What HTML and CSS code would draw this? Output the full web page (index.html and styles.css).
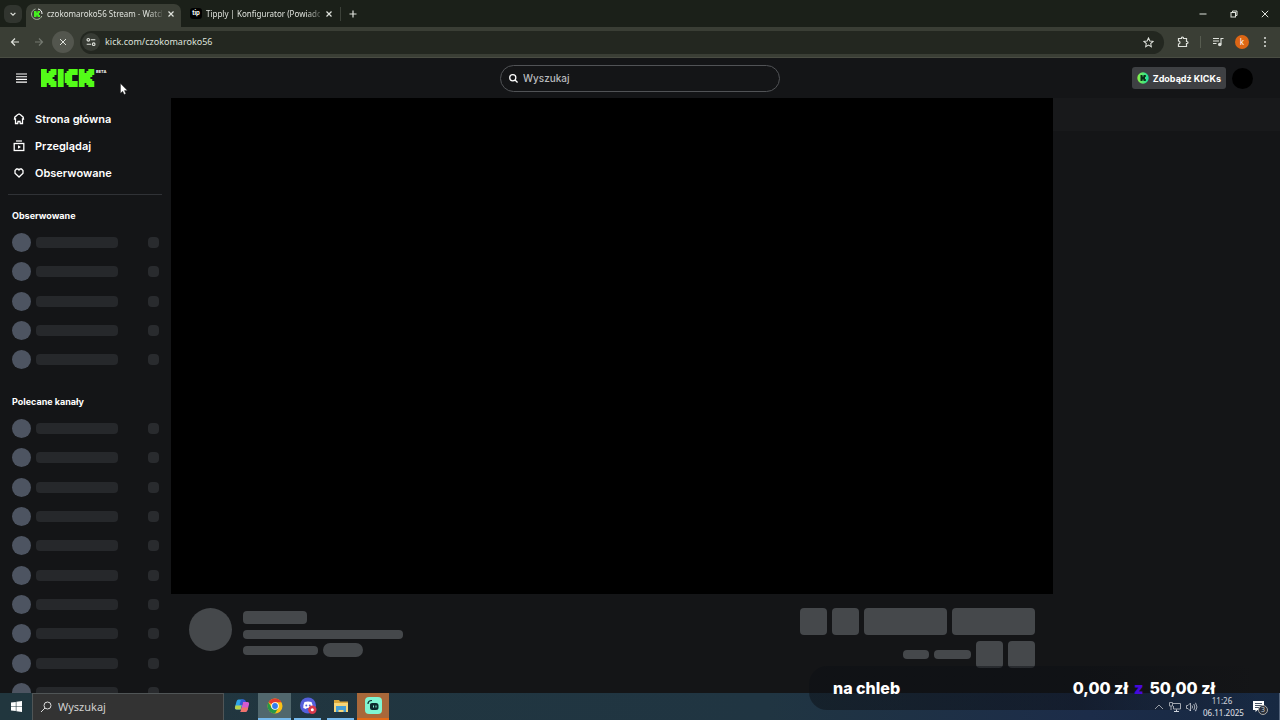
FILE: index.html
```html
<!DOCTYPE html>
<html lang="pl">
<head>
<meta charset="utf-8">
<title>czokomaroko56 Stream - Watch Live on Kick</title>
<link rel="stylesheet" href="styles.css">
</head>
<body>
<div class="tabstrip">
  <button class="tab-search" aria-label="Szukaj kart"><svg viewBox="0 0 10 10" width="8" height="8"><path d="M2 3.500l3 3 3-3" fill="none" stroke="currentColor" stroke-width="1.500"/></svg></button>
  <div class="tab tab-active">
    <svg class="favicon" viewBox="0 0 12 12" width="12" height="12"><path d="M4.500 1A5.300 5.300 0 1 0 10.800 8" fill="none" stroke="#a9b8a2" stroke-width="1"/><path d="M7 1a5 5 0 0 1 4 5" fill="none" stroke="#fff" stroke-width="1"/><path d="M3 3h2.500v1.500h1V3H9v2H8v2h1v2H6.500V7.500h-1V9H3z" fill="#45ef20"/></svg>
    <span class="tab-title">czokomaroko56 Stream - Watch</span>
    <button class="tab-close" aria-label="Zamknij kartę"><svg viewBox="0 0 8 8" width="8" height="8"><path d="M1.500 1.500l5 5m0-5l-5 5" stroke="currentColor" stroke-width="1.200"/></svg></button>
  </div>
  <div class="tab tab-second">
    <span class="tip-icon">tip</span>
    <span class="tab-title">Tipply | Konfigurator (Powiadon</span>
    <button class="tab-close" aria-label="Zamknij kartę"><svg viewBox="0 0 8 8" width="8" height="8"><path d="M1.500 1.500l5 5m0-5l-5 5" stroke="currentColor" stroke-width="1.200"/></svg></button>
  </div>
  <button class="new-tab" aria-label="Nowa karta"><svg viewBox="0 0 8 8" width="8" height="8"><path d="M4 .5v7M.5 4h7" stroke="currentColor" stroke-width="1.200"/></svg></button>
  <div class="window-buttons">
    <button aria-label="Minimalizuj"><svg viewBox="0 0 8 8" width="8" height="8"><path d="M.5 4h7" stroke="currentColor"/></svg></button>
    <button aria-label="Przywróć"><svg viewBox="0 0 8 8" width="8" height="8" fill="none" stroke="currentColor"><rect x="1" y="2.500" width="4.500" height="4.500"/><path d="M2.500 2.500V1H7v4.500H5.500"/></svg></button>
    <button aria-label="Zamknij"><svg viewBox="0 0 8 8" width="8" height="8"><path d="M.8.8l6.400 6.400m0-6.400L.8 7.200" stroke="currentColor"/></svg></button>
  </div>
</div>
<div class="toolbar">
  <button class="tool" aria-label="Wstecz"><svg viewBox="0 0 10 10" width="10" height="10" fill="none" stroke="currentColor" stroke-width="1.200"><path d="M9 5H1.500M5 1.500L1.500 5 5 8.500"/></svg></button>
  <button class="tool tool-dim" aria-label="Dalej"><svg viewBox="0 0 10 10" width="10" height="10" fill="none" stroke="currentColor" stroke-width="1.200"><path d="M1 5h7.500M5 1.500L8.500 5 5 8.500"/></svg></button>
  <button class="tool tool-round" aria-label="Zatrzymaj"><svg viewBox="0 0 10 10" width="10" height="10"><path d="M2 2l6 6m0-6L2 8" stroke="currentColor" stroke-width="1"/></svg></button>
  <div class="omnibox">
    <button class="site-info" aria-label="Informacje o stronie"><svg viewBox="0 0 10 10" width="10" height="10" fill="none" stroke="currentColor" stroke-width="1.100"><circle cx="2.300" cy="2.800" r="1.300"/><path d="M4.800 2.800h4.500M.7 7.200h4.500"/><circle cx="7.700" cy="7.200" r="1.300"/></svg></button>
    <input class="url" aria-label="Adres" value="kick.com/czokomaroko56">
    <button class="bookmark" aria-label="Dodaj do zakładek"><svg viewBox="0 0 12 12" width="11" height="11"><path d="M6 1l1.500 3.300 3.500.4-2.600 2.400.7 3.600L6 8.900l-3.100 1.800.7-3.600L1 4.700l3.500-.4z" fill="none" stroke="currentColor" stroke-width="1.100"/></svg></button>
  </div>
  <div class="browser-actions">
    <button aria-label="Rozszerzenia"><svg viewBox="0 0 12 12" width="12" height="12"><path d="M1.500 2.500H4.500V2a1 1 0 0 1 2 0v.5H9.500v3h.5a1 1 0 0 1 0 2h-.5v3h-8V8a1.500 1.500 0 0 0 0-3z" fill="none" stroke="currentColor" stroke-width="1.200"/></svg></button>
    <span class="tool-divider"></span>
    <button aria-label="Multimedia"><svg viewBox="0 0 12 12" width="12" height="12" fill="none" stroke="currentColor" stroke-width="1.100"><path d="M1 2.500h6M1 5h6M1 7.500h3.500M9 8.500V2.500h2.500"/><circle cx="7.800" cy="8.500" r="1.200" fill="currentColor"/></svg></button>
    <button class="profile" aria-label="Profil">k</button>
    <button aria-label="Menu"><svg viewBox="0 0 10 10" width="10" height="10" fill="currentColor"><circle cx="5" cy="1" r="1"/><circle cx="5" cy="5" r="1"/><circle cx="5" cy="9" r="1"/></svg></button>
  </div>
</div>
<div class="page">
  <header class="site-header">
    <div class="brand">
      <button class="menu" aria-label="Menu"><svg viewBox="0 0 11 10" width="11" height="10"><path d="M0 1h11M0 3.700h11M0 6.400h11M0 9.100h11" stroke="currentColor" stroke-width="1.100"/></svg></button>
      <a class="logo" href="#" aria-label="Kick"><svg viewBox="0 0 54 18" width="54" height="18" fill="#53fc18"><path id="k" d="M0 0h5.800v4h1.800V2h1.900V0h6v6h-2v2h-1.900v2h1.900v2h2v6h-6v-2H7.600v-2H5.800v4H0z"/><path d="M16.800 0h5.900v18h-5.900zM27.500 0h9.200v6h-5.500v6h5.500v6h-9.200v-2h-1.900v-2h-1.900V4h1.900V2h1.900z"/><use href="#k" x="37.800"/></svg></a>
      <span class="beta">BETA</span>
    </div>
    <label class="site-search"><svg viewBox="0 0 10 10" width="9" height="9" fill="none" stroke="#fff" stroke-width="1.400"><circle cx="4.200" cy="4.200" r="3.400"/><path d="M6.700 6.700L9.500 9.500"/></svg><input aria-label="Wyszukaj" placeholder="Wyszukaj"></label>
    <div class="account">
      <button class="kicks"><svg viewBox="0 0 12 12" width="12" height="12"><defs><linearGradient id="coin" x1="0" x2="1"><stop offset="0" stop-color="#8bf346"/><stop offset="1" stop-color="#19dfa0"/></linearGradient></defs><circle cx="6" cy="6" r="5.700" fill="url(#coin)"/><path d="M3.500 3h2v1.500h1V3h2.300v2H8v2h.8v2H6.500V7.500h-1V9h-2z" fill="#092d18"/></svg>Zdobądź KICKs</button>
      <button class="avatar" aria-label="Konto"></button>
    </div>
  </header>
  <div class="columns">
    <aside class="sidebar">
      <nav>
        <a href="#"><svg viewBox="0 0 12 12" width="12" height="12"><path d="M6 1L4.500 1.800 1.800 4.200 1.500 6H2.500v4.500h2.200L5 8.500h2l.3 2h2.200V6h1L10.200 4.200 7.500 1.800z" fill="none" stroke="currentColor" stroke-width="1.300"/></svg>Strona główna</a>
        <a href="#"><svg viewBox="0 0 12 12" width="12" height="12"><path d="M3 1h6" stroke="currentColor" stroke-width="1.200"/><rect x="1.200" y="3.500" width="9.600" height="7" fill="none" stroke="currentColor" stroke-width="1.300"/><path d="M5 5.200v3.600L8 7z" fill="currentColor"/></svg>Przeglądaj</a>
        <a href="#"><svg viewBox="0 0 12 12" width="12" height="12"><path d="M6 10L2 6.200V3.500L3.500 2H5l1 1 1-1h1.500L10 3.500v2.700z" fill="none" stroke="currentColor" stroke-width="1.300"/></svg>Obserwowane</a>
      </nav>
      <h2>Obserwowane</h2>
      <ul class="channels followed">
        <li><i></i><b></b><s></s></li><li><i></i><b></b><s></s></li><li><i></i><b></b><s></s></li><li><i></i><b></b><s></s></li><li><i></i><b></b><s></s></li>
      </ul>
      <h2>Polecane kanały</h2>
      <ul class="channels recommended">
        <li><i></i><b></b><s></s></li><li><i></i><b></b><s></s></li><li><i></i><b></b><s></s></li><li><i></i><b></b><s></s></li><li><i></i><b></b><s></s></li><li><i></i><b></b><s></s></li><li><i></i><b></b><s></s></li><li><i></i><b></b><s></s></li><li><i></i><b></b><s></s></li><li><i></i><b></b><s></s></li>
      </ul>
    </aside>
    <main>
      <div class="video"></div>
      <section class="stream-info">
        <span class="bone host"></span>
        <div class="details"><span class="bone name"></span><span class="bone title"></span><div class="tags"><span class="bone category"></span><span class="bone tag"></span></div></div>
        <div class="actions">
          <div class="action-row"><span class="bone square"></span><span class="bone square"></span><span class="bone wide"></span><span class="bone wide"></span></div>
          <div class="action-row"><span class="bone pill"></span><span class="bone pill long"></span><span class="bone square"></span><span class="bone square"></span></div>
        </div>
      </section>
    </main>
    <aside class="chat"><div class="chat-head"></div></aside>
  </div>
</div>
<footer class="taskbar">
  <button class="start" aria-label="Start"><svg viewBox="0 0 11 11" width="11" height="11" fill="#fff"><path d="M0 1.600L4.800.9v4.300H0zM5.400.8L11 0v5.200H5.400zM0 5.800h4.800v4.300L0 9.400zM5.400 5.800H11V11l-5.600-.8z"/></svg></button>
  <label class="task-search"><svg viewBox="0 0 12 12" width="12" height="12" fill="none" stroke="#ddd"><circle cx="7.500" cy="4.500" r="3.500"/><path d="M5 7L1 11"/></svg><input aria-label="Wyszukaj" placeholder="Wyszukaj"></label>
  <button class="app" aria-label="Copilot"><svg viewBox="0 0 16 16" width="16" height="16"><path d="M4.500 1.500h5L7 11.500H2.500Q.5 11.500 1 9l1.500-5.500q.5-2 2-2z" fill="#2ca5e8"/><path d="M1.500 7.500h6L6.500 11.500h-4Q.5 11.500 1 9.500z" fill="#b9d34b"/><path d="M9 4h4.500q2 0 1.500 2.500L13.500 12q-.5 2-2.500 2H6.500z" fill="#d65ad0"/><path d="M7.700 9.500h6.500L13.500 12q-.5 2-2.500 2H6.500z" fill="#f0746a"/><path d="M7 1.500h3q1.500 0 2 2.500H9L8 7H5.500z" fill="#3457d8"/></svg></button>
  <button class="app app-current" aria-label="Chrome"><svg viewBox="0 0 16 16" width="16" height="16"><circle cx="8" cy="8" r="7.500" fill="#fbc116"/><path d="M8 8L1.500 4.250A7.500 7.500 0 0 1 14.500 4.250H8z" fill="#e33b2e"/><path d="M1.500 4.250A7.500 7.500 0 0 0 8 15.500L11.200 9.900 8 8 4.750 9.900z" fill="#279847"/><circle cx="8" cy="8" r="3.800" fill="#fff"/><circle cx="8" cy="8" r="2.900" fill="#317cec"/></svg></button>
  <button class="app app-open" aria-label="Discord"><svg viewBox="0 0 18 18" width="18" height="18"><circle cx="9" cy="8.500" r="8" fill="#5560dc"/><path d="M5.500 5q3.500-1.200 7 0 1.500 3 1.200 6l-2.700 1-.7-1H7.700L7 12l-2.700-1Q4 8 5.500 5z" fill="#fff"/><circle cx="7.300" cy="8.500" r="1" fill="#5560dc"/><circle cx="10.800" cy="8.500" r="1" fill="#5560dc"/><circle cx="13.300" cy="12.800" r="4.200" fill="#d83a4c"/><circle cx="13.300" cy="12.800" r="1.500" fill="#fff"/></svg></button>
  <button class="app app-open" aria-label="Eksplorator plików"><svg viewBox="0 0 16 14" width="16" height="14"><path d="M1 1h5l1 1.500h8V13H1z" fill="#dba83a"/><path d="M1 4h14v9H1z" fill="#f7d678"/><path d="M3 7h10v6h-2.500v-2h-5v2H3z" fill="#479ed2"/></svg></button>
  <button class="app app-alert" aria-label="Streamlabs"><svg viewBox="0 0 17 17" width="17" height="17"><rect width="17" height="17" rx="4" fill="#80f5d2"/><path d="M5 7.500Q5 6 7 6h4q2.500 0 2.500 2.500v2q0 2.500-2.500 2.500H7q-2 0-2-2z" fill="#0c292c"/><path d="M3 7q0-3.500 4-3.500" fill="none" stroke="#0c292c" stroke-width="1.200"/><path d="M8.500 8.500v2M11 8.500v2" stroke="#80f5d2"/></svg></button>
  <div class="tray">
    <svg viewBox="0 0 10 10" width="10" height="10"><path d="M1 7l4-4 4 4" fill="none" stroke="currentColor"/></svg>
    <svg viewBox="0 0 12 12" width="12" height="12" fill="none" stroke="currentColor"><path d="M3.500 2.500h8v5.500h-7V5M.5 1.500h3V5h-3zM7.500 8v2.500M5 10.500h5M2 5v4"/></svg>
    <svg viewBox="0 0 12 12" width="12" height="12" fill="none" stroke="currentColor"><path d="M.5 4.500H2L4.500 2v8L2 7.500H.5zM6 4.500q1 1.500 0 3M7.800 3q2 3 0 6M9.500 1.800q3 4.200 0 8.400"/></svg>
    <time>11:26<br>06.11.2025</time>
    <div class="notice"><svg viewBox="0 0 13 13" width="13" height="13"><path d="M1 1h11v9H5.500L3.500 12v-2H1z" fill="#fff"/><path d="M3 3.500h7M3 5.500h7M3 7.500h4" stroke="#1a2b40" stroke-width=".8"/></svg><span class="notice-count">3</span></div>
  </div>
</footer>
<div class="goal"><span>na chleb</span><span class="goal-amount"><span>0,00 zł</span><b>z</b><span>50,00 zł</span></span></div>
<svg class="cursor" viewBox="0 0 8 12" width="8" height="12"><path d="M.5.5v9.800l2.200-2 1.500 3.200 1.600-.8L4.400 7.600h3z" fill="#fff" stroke="#222" stroke-width=".4"/></svg>
</body>
</html>
```
FILE: styles.css
```css
* { box-sizing: border-box; }
body { margin: 0; height: 100vh; display: flex; flex-direction: column; overflow: hidden; background: #141517; color: #fff; font-family: Inter, "Noto Sans", sans-serif; }
button { border: 0; padding: 0; background: none; color: inherit; font: inherit; display: flex; align-items: center; justify-content: center; flex-shrink: 0; }
input { border: 0; padding: 0; background: none; color: inherit; font: inherit; outline: 0; min-width: 0; flex: 1; }
a { color: inherit; text-decoration: none; }
svg { flex-shrink: 0; display: block; }

.tabstrip { height: 27px; flex-shrink: 0; display: flex; align-items: center; background: #1b2019; color: #dfe2dc; font: 8px/12px "Noto Sans", sans-serif; }
.tab-search { width: 18px; height: 18px; margin: 0 4px; border-radius: 6px; background: #31352f; }
.tab { display: flex; align-items: center; gap: 4px; }
.tab-active { width: 155px; height: 23px; align-self: flex-end; padding: 0 5px 4px; background: #3a3e35; border-radius: 7px 7px 0 0; }
.tab-second { width: 159px; padding: 0 6px 0 9px; }
.tab-title { flex: 1; min-width: 0; overflow: hidden; white-space: nowrap; mask-image: linear-gradient(to right, #000 88%, #0004); }
.tab-close { width: 10px; height: 12px; }
.tip-icon { width: 12px; height: 11px; border-radius: 3px; background: #000; color: #fff; font: bold 6px/10px Inter, sans-serif; text-align: center; flex-shrink: 0; }
.new-tab { width: 24px; height: 14px; border-left: 1px solid #3c4139; }
.window-buttons { margin-left: auto; display: flex; }
.window-buttons button { width: 31px; height: 24px; }

.toolbar { height: 31px; flex-shrink: 0; display: flex; align-items: center; padding: 0 10px 0 4px; background: #3a3e35; color: #dfe2dc; border-bottom: 1px solid #4a4d43; font: 9px/14px "Noto Sans", sans-serif; }
.tool { width: 22px; height: 22px; margin-right: 2px; }
.tool-dim { color: #747970; }
.tool-round { border-radius: 50%; background: #53564e; margin-right: 6px; }
.omnibox { flex: 1; height: 23px; display: flex; align-items: center; gap: 5px; padding: 0 10px 0 2px; border-radius: 12px; background: #232720; }
.site-info { width: 18px; height: 18px; border-radius: 50%; background: #373b34; }
.browser-actions { display: flex; align-items: center; gap: 11px; padding-left: 13px; }
.tool-divider { width: 1px; height: 12px; background: #575c50; }
.profile { width: 14px; height: 14px; border-radius: 50%; background: #dc6615; color: #fff; font-size: 8px; }

.page { flex: 1; min-height: 0; display: flex; flex-direction: column; overflow: hidden; }
.site-header { height: 40px; flex-shrink: 0; display: grid; grid-template-columns: 1fr 280px 1fr; align-items: center; padding: 0 16px; }
.brand { display: flex; align-items: center; gap: 14px; }
.beta { align-self: flex-start; margin-left: -13px; font: bold 4px/5px Inter, sans-serif; }
.site-search { height: 27px; display: flex; align-items: center; gap: 5px; padding: 0 8px; border: 1px solid #515356; border-radius: 14px; font-size: 10px; font-weight: 500; }
.site-search input::placeholder { color: #b8babd; opacity: 1; }
.account { display: flex; justify-content: flex-end; align-items: center; gap: 6px; padding-right: 11px; }
.kicks { height: 22px; padding: 0 5px; gap: 4px; border-radius: 3px; background: #3e4043; font-size: 9px; font-weight: 700; }
.avatar { width: 21px; height: 21px; border-radius: 50%; background: #000; }
.columns { flex: 1; min-height: 0; display: grid; grid-template-columns: 171px 1fr 227px; }

.sidebar { overflow: hidden; padding: 7px 9px 0 8px; }
nav { padding-bottom: 8px; border-bottom: 1px solid #303236; }
nav a { height: 27px; display: flex; align-items: center; gap: 10px; padding-left: 5px; font-size: 11px; font-weight: 600; }
h2 { margin: 13px 4px 9px; font-size: 9px; line-height: 16px; font-weight: 700; }
.channels { list-style: none; margin: 0; padding: 0 3px 0 4px; display: flex; flex-direction: column; justify-content: space-between; }
.followed { height: 136px; margin-bottom: 25px; }
.recommended { height: 283px; }
.channels li { height: 19px; display: flex; align-items: center; gap: 5px; }
.channels i { width: 19px; height: 19px; border-radius: 50%; background: #4d5461; }
.channels b { width: 82px; height: 11px; border-radius: 4px; background: #26282b; }
.channels s { width: 11px; height: 11px; margin-left: auto; border-radius: 4px; background: #292b2e; }

main { min-width: 0; display: flex; flex-direction: column; }
.video { aspect-ratio: 16 / 9; flex-shrink: 0; background: #000; }
.stream-info { display: flex; align-items: flex-start; gap: 11px; padding: 14px 18px 0; }
.bone { display: block; background: #45484b; border-radius: 4px; }
.host { width: 43px; height: 43px; border-radius: 50%; }
.details { display: flex; flex-direction: column; gap: 6px; padding-top: 3px; }
.name { width: 64px; height: 13px; }
.title { width: 160px; height: 9px; }
.tags { display: flex; align-items: center; gap: 5px; margin-top: -2px; }
.category { width: 75px; height: 9px; }
.tag { width: 40px; height: 14px; border-radius: 7px; }
.actions { margin-left: auto; display: flex; flex-direction: column; gap: 6px; }
.action-row { display: flex; justify-content: flex-end; align-items: center; gap: 5px; }
.square { width: 27px; height: 27px; }
.wide { width: 83px; height: 27px; }
.pill { width: 26px; height: 9px; }
.long { width: 37px; }
.chat-head { height: 33px; background: #18191b; }

.taskbar { height: 27px; flex-shrink: 0; display: flex; align-items: stretch; background: linear-gradient(to right, #21363e, #203542 60%, #1c2c49 85%, #172942); }
.start { width: 32px; }
.task-search { width: 192px; display: flex; align-items: center; gap: 6px; margin-right: 1px; padding: 0 7px; background: #333; border: 1px solid #505556; border-bottom: 0; font: 11px/14px "Noto Sans", sans-serif; }
.task-search input::placeholder { color: #cfcfcf; opacity: 1; }
.app { width: 33px; border-bottom: 2px solid transparent; }
.app-current { background: #51676d; border-color: #76b9ed; }
.app-open { width: 27px; margin: 0 3px; border-color: #76b9ed; }
.app-alert { width: 32px; background: #a8683a; border-color: #e36a16; }
.tray { margin-left: auto; padding-right: 14px; display: flex; align-items: center; gap: 5px; color: #ccd2dc; border-right: 1px solid #53637a; }
time { width: 38px; color: #e2e5ec; font: 8px/12px "Noto Sans", sans-serif; text-align: center; white-space: nowrap; }
.notice { position: relative; margin-left: 6px; }
.notice-count { position: absolute; left: 6px; top: 5px; width: 10px; height: 10px; border: 1px solid #aaa; border-radius: 50%; background: #292f38; font: 7px/8px "Noto Sans", sans-serif; text-align: center; }

.goal { position: absolute; right: 21px; bottom: 10px; width: 450px; height: 44px; display: flex; justify-content: space-between; align-items: center; padding: 0 44px 0 24px; border-radius: 18px; background: linear-gradient(to right, #0c0f1480, #0c0f1480 60%, transparent); font-size: 16px; font-weight: 800; }
.goal-amount { display: flex; gap: 6px; }
.goal b { color: #4608dc; }
.cursor { position: absolute; left: 120px; top: 83px; }
```
